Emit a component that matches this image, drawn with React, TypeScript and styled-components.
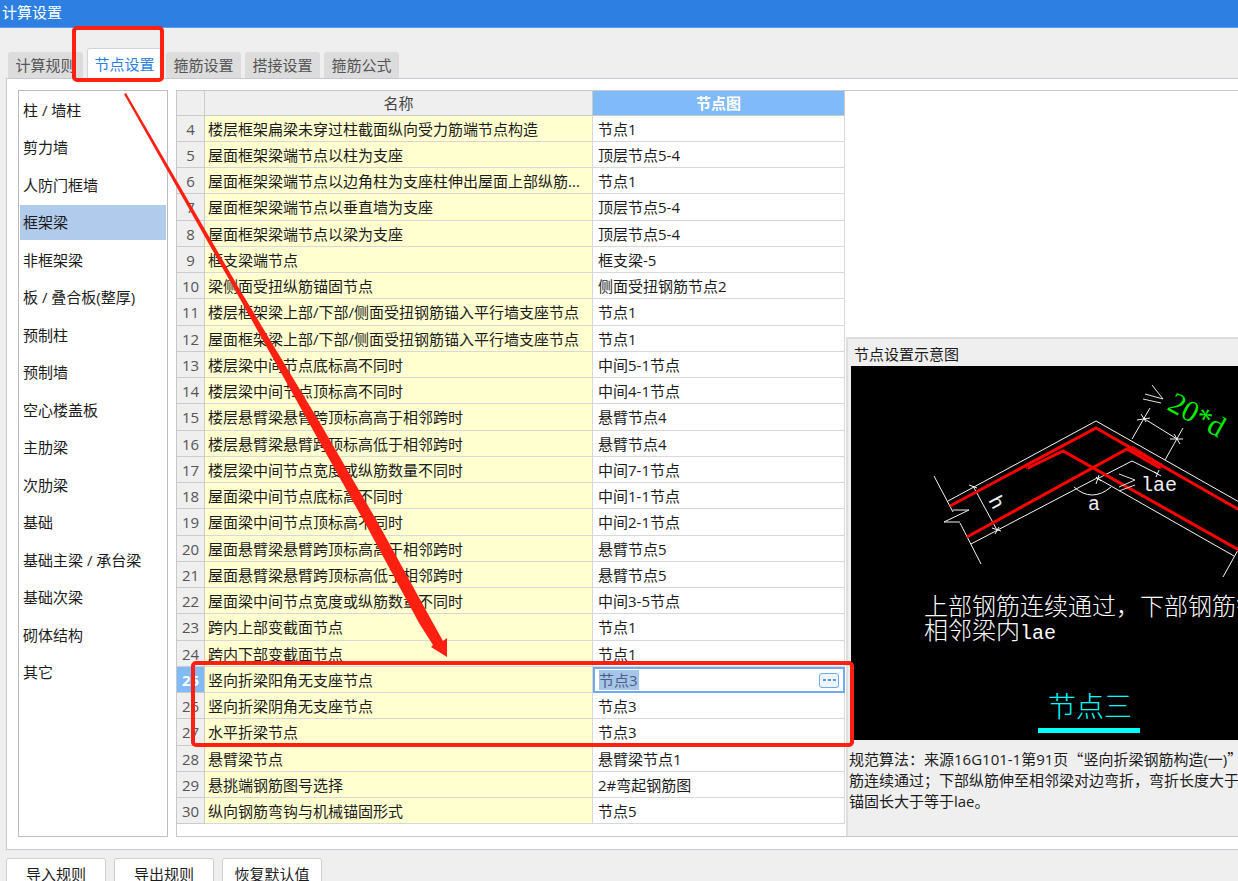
import React, { useState } from "react";
import styled, { createGlobalStyle, css } from "styled-components";

const GlobalStyle = createGlobalStyle`
  * { box-sizing: border-box; }
  body {
    margin: 0;
    background: #efefef;
    color: #1c1c1c;
    font: 15px/20px "Open Sans", "Noto Sans CJK SC", sans-serif;
  }
  button, input { font: inherit; color: inherit; }
`;

const Window = styled.main`
  position: relative;
  height: 100vh;
  overflow: hidden;
`;

const TitleBar = styled.header`
  height: 28px;
  padding: 2px;
  background: #2d7fe2;
  border-bottom: 1px solid #5b9bea;
  color: #fff;
  line-height: 20px;
`;

const TabStrip = styled.nav`
  display: flex;
  align-items: flex-end;
  gap: 4px;
  height: 50px;
  padding-left: 8px;
`;

const Tab = styled.button<{ $active: boolean }>`
  width: 75px;
  height: 26px;
  padding: 0;
  border: 0;
  border-radius: 3px 3px 0 0;
  background: #dcdcdc;
  color: #555;
  white-space: nowrap;
  ${(p) =>
    p.$active &&
    css`
      height: 30px;
      border: 1px solid #cfd3da;
      border-bottom: 0;
      background: #fff;
      color: #2d7fe2;
    `}
`;

const Panel = styled.section`
  display: flex;
  gap: 8px;
  margin-left: 6px;
  padding: 11px 0 12px 11px;
  border: 1px solid #c6c9d1;
  border-right: 0;
  background: #fff;
`;

const Sidebar = styled.ul`
  flex: none;
  width: 150px;
  margin: 0;
  padding: 2px 1px;
  border: 1px solid #bdbdbd;
  list-style: none;
`;

const SidebarItem = styled.li`
  margin-bottom: 2px;
  &:nth-child(even) { margin-bottom: 3px; }
`;

const SidebarButton = styled.button<{ $selected: boolean }>`
  display: block;
  width: 100%;
  height: 35px;
  padding: 0 3px 2px;
  border: 0;
  background: ${(p) => (p.$selected ? "#b1cbec" : "transparent")};
  text-align: left;
  white-space: nowrap;
`;

const Frame = styled.div`
  display: flex;
  flex: 1;
  min-width: 0;
  border: 1px solid #c8c8c8;
  border-right: 0;
`;

const TableArea = styled.div`
  flex: none;
  padding-bottom: 12px;
`;

const Table = styled.table`
  width: 668px;
  table-layout: fixed;
  border-collapse: separate;
  border-spacing: 0;
`;

const ColumnHead = styled.th<{ $active?: boolean }>`
  height: 25px;
  padding: 0;
  border-right: 1px solid #cbcbcb;
  border-bottom: 1px solid #cbcbcb;
  background: ${(p) => (p.$active ? "#80bafa" : "#efefef")};
  color: ${(p) => (p.$active ? "#fff" : "#444")};
  font-weight: ${(p) => (p.$active ? 700 : 400)};
`;

const Row = styled.tr`
  height: 26px;
  &:nth-child(4n) { height: 27px; }
`;

const RowNumber = styled.th<{ $active: boolean }>`
  padding: 0;
  border-right: 1px solid #cbcbcb;
  border-bottom: 1px solid #cbcbcb;
  background: ${(p) => (p.$active ? "#80bafa" : "#efefef")};
  color: ${(p) => (p.$active ? "#fff" : "#555")};
  font-weight: ${(p) => (p.$active ? 700 : 400)};
`;

const Cell = styled.td<{ $fill?: boolean }>`
  padding: 0 ${(p) => (p.$fill ? 3 : 5)}px;
  border-right: 1px solid #d8d8d8;
  border-bottom: 1px solid #d8d8d8;
  background: ${(p) => (p.$fill ? "#ffffcf" : "#fff")};
  overflow: hidden;
  text-overflow: ellipsis;
  white-space: nowrap;
`;

const EditCell = styled.td`
  padding: 0;
`;

const Editor = styled.div`
  display: flex;
  align-items: center;
  height: 26px;
  padding: 0 4px;
  border: 2px solid #6dabea;
  background: #fff;
`;

const Field = styled.span`
  flex: 1;
  display: flex;
`;

const EditorInput = styled.input`
  width: 40px;
  height: 20px;
  padding: 0;
  border: 0;
  outline: 0;
  background: #a6c5ec;
  color: #4d5f78;
`;

const MoreButton = styled.button`
  display: flex;
  align-items: center;
  justify-content: center;
  gap: 2px;
  width: 20px;
  height: 15px;
  padding: 0;
  border: 1px solid #6dabea;
  border-radius: 3px;
  background: #eef5fd;
`;

const Dot = styled.i`
  width: 3px;
  height: 2px;
  background: #5a9be0;
`;

const Preview = styled.aside`
  flex: 1;
  min-width: 0;
  align-self: flex-end;
  margin-left: 1px;
  height: 499px;
  padding-left: 3px;
  border: 1px solid #dedede;
  border-width: 2px 0 0 2px;
  background: #efefef;
  overflow: hidden;
  white-space: nowrap;
`;

const PreviewTitle = styled.h2`
  margin: 0;
  padding: 5px 3px 2px;
  height: 27px;
  font-size: 15px;
  line-height: 20px;
  font-weight: 400;
`;

const Drawing = styled.svg`
  display: block;
  background: #000;
`;

const Note = styled.p`
  margin: 8px 0 0 -2px;
  line-height: 21px;
`;

const Quote = styled.span`
  font-family: "Noto Sans CJK SC", sans-serif;
`;

const Footer = styled.footer`
  display: flex;
  gap: 8px;
  padding: 8px 6px;
`;

const FooterButton = styled.button`
  width: 100px;
  height: 32px;
  padding: 0;
  border: 1px solid #cfcfcf;
  border-radius: 3px;
  background: #fff;
`;

const Markup = styled.svg`
  position: absolute;
  top: 0;
  left: 0;
  pointer-events: none;
`;

const tabs = ["计算规则", "节点设置", "箍筋设置", "搭接设置", "箍筋公式"];

const members = [
  "柱 / 墙柱", "剪力墙", "人防门框墙", "框架梁", "非框架梁", "板 / 叠合板(整厚)",
  "预制柱", "预制墙", "空心楼盖板", "主肋梁", "次肋梁", "基础",
  "基础主梁 / 承台梁", "基础次梁", "砌体结构", "其它",
];

const rows: [number, string, string][] = [
  [4, "楼层框架扁梁未穿过柱截面纵向受力筋端节点构造", "节点1"],
  [5, "屋面框架梁端节点以柱为支座", "顶层节点5-4"],
  [6, "屋面框架梁端节点以边角柱为支座柱伸出屋面上部纵筋...", "节点1"],
  [7, "屋面框架梁端节点以垂直墙为支座", "顶层节点5-4"],
  [8, "屋面框架梁端节点以梁为支座", "顶层节点5-4"],
  [9, "框支梁端节点", "框支梁-5"],
  [10, "梁侧面受扭纵筋锚固节点", "侧面受扭钢筋节点2"],
  [11, "楼层框架梁上部/下部/侧面受扭钢筋锚入平行墙支座节点", "节点1"],
  [12, "屋面框架梁上部/下部/侧面受扭钢筋锚入平行墙支座节点", "节点1"],
  [13, "楼层梁中间节点底标高不同时", "中间5-1节点"],
  [14, "楼层梁中间节点顶标高不同时", "中间4-1节点"],
  [15, "楼层悬臂梁悬臂跨顶标高高于相邻跨时", "悬臂节点4"],
  [16, "楼层悬臂梁悬臂跨顶标高低于相邻跨时", "悬臂节点4"],
  [17, "楼层梁中间节点宽度或纵筋数量不同时", "中间7-1节点"],
  [18, "屋面梁中间节点底标高不同时", "中间1-1节点"],
  [19, "屋面梁中间节点顶标高不同时", "中间2-1节点"],
  [20, "屋面悬臂梁悬臂跨顶标高高于相邻跨时", "悬臂节点5"],
  [21, "屋面悬臂梁悬臂跨顶标高低于相邻跨时", "悬臂节点5"],
  [22, "屋面梁中间节点宽度或纵筋数量不同时", "中间3-5节点"],
  [23, "跨内上部变截面节点", "节点1"],
  [24, "跨内下部变截面节点", "节点1"],
  [25, "竖向折梁阳角无支座节点", "节点3"],
  [26, "竖向折梁阴角无支座节点", "节点3"],
  [27, "水平折梁节点", "节点3"],
  [28, "悬臂梁节点", "悬臂梁节点1"],
  [29, "悬挑端钢筋图号选择", "2#弯起钢筋图"],
  [30, "纵向钢筋弯钩与机械锚固形式", "节点5"],
];

const EDITING = 25;
const CAD = '"Liberation Mono", "Noto Sans CJK SC", monospace';

function NodeDrawing() {
  return (
    <Drawing width="420" height="374" viewBox="0 0 420 374" role="img" aria-label="节点三">
      <g fill="none" stroke="#f4f4f4" strokeWidth="1">
        <path d="M97 135 245 55 420 154" />
        <path d="M120 178 246 112 383 190" />
        <path d="M83 110 102 146M109 157 130 198" />
        <path d="M102 144H118L93 156H109" />
        <path d="M122 120 146 164M118 119 126 122M141 162 150 165M148 161 144 168" />
        <path d="M223 121Q241 137 260 121" />
        <path d="M246 113 281 95 307 108M245 111 250 115M245 118 248 109M303 106 310 110M308 104 305 111" />
        <path d="M299 42 281 73M332 62 314 94M292 52 326 73M286 54 299 52M290 48 295 56M319 73 332 73M323 68 329 78" />
        <path d="M397 166 372 211" />
      </g>
      <g fill="none" stroke="#f00" strokeWidth="2">
        <path strokeWidth="3" d="M99 140 245 62 420 162" />
        <path strokeWidth="3" d="M116 171 276 83 309 102" />
        <path strokeWidth="3" d="M177 102 212 85 420 202" />
      </g>
      <g fill="none" stroke="#f00" strokeWidth="1">
        <path d="M176 98 210 80M281 80 312 99" />
        <circle cx="177" cy="101" r="2" />
        <circle cx="310" cy="100" r="2" />
      </g>
      <g fill="#f0f0f0" fontFamily={CAD} fontSize="20">
        <text x="290" y="125">lae</text>
        <text x="237" y="144">a</text>
        <text transform="translate(137 134) rotate(62)">h</text>
      </g>
      <g fill="none" stroke="#e4e4e4" strokeWidth="1">
        <path d="M268 108 284 114 268 121M268 125 284 119" />
        <path d="M301 19 312 33 294 28M292 33 310 37" />
      </g>
      <text
        transform="translate(315 43) rotate(29)"
        fill="#0e0"
        fontFamily='"Liberation Serif", serif'
        fontSize="30"
      >
        20*d
      </text>
      <g fill="#fff" fontFamily={CAD} fontSize="24" fontWeight="300">
        <text x="73" y="249">上部钢筋连续通过，下部钢筋锚入</text>
        <text x="73" y="273">
          相邻梁内<tspan fontSize="20">lae</tspan>
        </text>
      </g>
      <text x="197" y="351" fill="#0ff" fontFamily={CAD} fontSize="28" fontWeight="300">
        节点三
      </text>
      <rect x="187" y="362" width="102" height="5" fill="#0ff" />
    </Drawing>
  );
}

export default function App() {
  const [tab, setTab] = useState(1);
  const [member, setMember] = useState(3);
  const [value, setValue] = useState("节点3");

  return (
    <Window>
      <GlobalStyle />
      <TitleBar>计算设置</TitleBar>
      <TabStrip role="tablist">
        {tabs.map((t, i) => (
          <Tab key={t} role="tab" aria-selected={i === tab} $active={i === tab} onClick={() => setTab(i)}>
            {t}
          </Tab>
        ))}
      </TabStrip>

      <Panel>
        <Sidebar>
          {members.map((m, i) => (
            <SidebarItem key={m}>
              <SidebarButton $selected={i === member} onClick={() => setMember(i)}>
                {m}
              </SidebarButton>
            </SidebarItem>
          ))}
        </Sidebar>

        <Frame>
          <TableArea>
            <Table>
              <colgroup>
                <col width="28" />
                <col width="388" />
                <col width="252" />
              </colgroup>
              <thead>
                <tr>
                  <ColumnHead />
                  <ColumnHead scope="col">名称</ColumnHead>
                  <ColumnHead scope="col" $active>节点图</ColumnHead>
                </tr>
              </thead>
              <tbody>
                {rows.map(([n, name, node]) => (
                  <Row key={n}>
                    <RowNumber scope="row" $active={n === EDITING}>{n}</RowNumber>
                    <Cell $fill>{name}</Cell>
                    {n === EDITING ? (
                      <EditCell>
                        <Editor>
                          <Field>
                            <EditorInput
                              aria-label={name}
                              value={value}
                              onChange={(e) => setValue(e.target.value)}
                            />
                          </Field>
                          <MoreButton aria-label="选择节点图">
                            <Dot /><Dot /><Dot />
                          </MoreButton>
                        </Editor>
                      </EditCell>
                    ) : (
                      <Cell>{node}</Cell>
                    )}
                  </Row>
                ))}
              </tbody>
            </Table>
          </TableArea>

          <Preview>
            <PreviewTitle>节点设置示意图</PreviewTitle>
            <NodeDrawing />
            <Note>
              规范算法：来源16G101-1第91页<Quote>“</Quote>竖向折梁钢筋构造(一)<Quote>”</Quote>
              <br />
              筋连续通过；下部纵筋伸至相邻梁对边弯折，弯折长度大于
              <br />
              锚固长大于等于lae。
            </Note>
          </Preview>
        </Frame>
      </Panel>

      <Footer>
        <FooterButton>导入规则</FooterButton>
        <FooterButton>导出规则</FooterButton>
        <FooterButton>恢复默认值</FooterButton>
      </Footer>

      <Markup width="860" height="760" viewBox="0 0 860 760" aria-hidden="true">
        <g fill="none" stroke="#ff2012" strokeWidth="4">
          <rect x="74" y="28" width="88" height="52" rx="3" />
          <rect x="193" y="663" width="659" height="82" rx="3" />
        </g>
        <path
          fill="#ff2012"
          d="M124 94 126 93 240 290 320 423 378 523 433 623 443 641 447 638V657L431 647 433 645 419 623 365 523 309 423 235 290Z"
        />
      </Markup>
    </Window>
  );
}
